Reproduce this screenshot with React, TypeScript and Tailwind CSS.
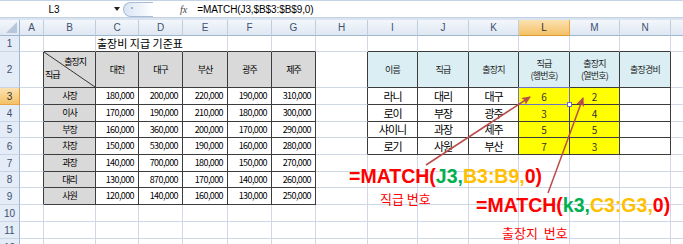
import React from 'react';

const KR = "font-['Noto_Sans_CJK_KR',sans-serif]";
const COLS = ['A', 'B', 'C', 'D', 'E', 'F', 'G', 'H', 'I', 'J', 'K', 'L', 'M', 'N', 'O'];
const ROWS = [1, 2, 3, 4, 5, 6, 7, 8, 9, 10, 11, 12];

const CITIES = ['대전', '대구', '부산', '광주', '제주'];
const GRADES = ['사장', '이사', '부장', '차장', '과장', '대리', '사원'];
const RATES = [
  ['180,000', '200,000', '220,000', '190,000', '310,000'],
  ['170,000', '190,000', '210,000', '180,000', '300,000'],
  ['160,000', '360,000', '200,000', '170,000', '290,000'],
  ['150,000', '530,000', '190,000', '160,000', '280,000'],
  ['140,000', '700,000', '180,000', '150,000', '270,000'],
  ['130,000', '870,000', '170,000', '140,000', '260,000'],
  ['120,000', '140,000', '160,000', '130,000', '250,000'],
];
const PEOPLE = [
  ['라니', '대리', '대구', '6', '2'],
  ['로이', '부장', '광주', '3', '4'],
  ['샤이니', '과장', '제주', '5', '5'],
  ['로기', '사원', '부산', '7', '3'],
];

const inLeft = (r: number, c: number) => r >= 2 && r <= 9 && c >= 2 && c <= 7;
const inRight = (r: number, c: number) => r >= 2 && r <= 6 && c >= 9 && c <= 14;
const inTable = (r: number, c: number) => inLeft(r, c) || inRight(r, c);

function FormulaBar() {
  return (
    <div className="h-[20px] flex flex-col bg-white">
      <div className="h-[1px] bg-[#c4d3e6]" />
      <div className="h-[16px] flex items-center">
        <div className="w-[108px] text-center text-[10px] text-black">L3</div>
        <svg width="6" height="4" className="ml-[6px]" viewBox="0 0 6 4">
          <path d="M0 0 L6 0 L3 4 Z" fill="#222" />
        </svg>
        <div className="ml-[3px] w-[30px] h-[15px] rounded-l-full border border-r-0 border-[#a9bcd6] bg-linear-to-r from-[#d9e4f3] to-white relative">
          <div className="absolute left-[7px] top-[4px] w-[2px] h-[2px] rounded-full bg-[#8fa2bd]" />
        </div>
        <span className="ml-[27px] text-[10px] italic font-['Liberation_Serif',serif] text-[#444]">fx</span>
        <span className="ml-[10px] text-[10px] text-black tracking-[-0.1px]">=MATCH(J3,$B$3:$B$9,0)</span>
      </div>
      <div className="h-[3px] bg-[#dae4f1] border-t border-[#c3d1e3]" />
    </div>
  );
}

function ColHeader({ label }: { label: string }) {
  const sel = label === 'L';
  return (
    <div
      className={
        sel
          ? 'flex items-center justify-center text-[10px] text-[#333] border-r border-b border-r-[#e9a546] border-b-[#e09a38] bg-linear-to-b from-[#fbe2b0] to-[#f4c166]'
          : 'flex items-center justify-center text-[10px] text-[#3e5170] border-r border-b border-r-[#c0cfe0] border-b-[#9eb6ce] bg-linear-to-b from-[#f3f7fc] to-[#dfe7f2]'
      }
    >
      {label === 'O' ? null : label}
    </div>
  );
}

function RowHeader({ r }: { r: number }) {
  const sel = r === 3;
  return (
    <div
      className={
        sel
          ? 'flex items-center justify-center text-[10px] text-[#333] border-r border-b border-r-[#e09a38] border-b-[#e9a546] bg-linear-to-b from-[#fbe2b0] to-[#f4c166]'
          : 'flex items-center justify-center text-[10px] text-[#3e5170] border-r border-b border-r-[#9eb6ce] border-b-[#c9d5e4] bg-[#e4ecf7]'
      }
    >
      {r}
    </div>
  );
}

function Cell({ r, c }: { r: number; c: number }) {
  const darkR = inTable(r, c) || inTable(r, c + 1);
  const darkB = inTable(r, c) || inTable(r + 1, c);
  let rightCls = darkR ? 'border-r-[#3c3c3c]' : 'border-r-[#d0d7e5]';
  if (r === 1 && (c === 3 || c === 4)) rightCls = 'border-r-white';
  const bottomCls = darkB ? 'border-b-[#3c3c3c]' : 'border-b-[#d0d7e5]';

  let bg = 'bg-white';
  if (inLeft(r, c) && (r === 2 || c === 2)) bg = 'bg-[#d9d9d9]';
  if (inRight(r, c) && r === 2) bg = 'bg-[#daeef3]';
  if (inRight(r, c) && r >= 3 && (c === 12 || c === 13)) bg = 'bg-[#ffff00]';

  let content: React.ReactNode = null;
  let layout = 'flex items-center justify-center';

  if (r === 1 && c === 3) {
    layout = 'relative z-10 flex items-center';
    content = (
      <span className={`${KR} text-[11px] text-black whitespace-nowrap pl-[1px]`}>출장비 지급 기준표</span>
    );
  } else if (r === 2 && c === 2) {
    layout = 'relative';
    content = (
      <>
        <svg className="absolute inset-0" width="51" height="35" viewBox="0 0 51 35">
          <line x1="0" y1="0" x2="51" y2="35" stroke="#333" strokeWidth="1" />
        </svg>
        <span className={`${KR} absolute right-[9px] top-[3px] text-[9px] tracking-[-1px] text-black`}>출장지</span>
        <span className={`${KR} absolute left-[1px] bottom-[6px] text-[9px] tracking-[-1px] text-black`}>직급</span>
      </>
    );
  } else if (r === 2 && c >= 3 && c <= 7) {
    content = <span className={`${KR} text-[9px] tracking-[-1px] text-black`}>{CITIES[c - 3]}</span>;
  } else if (r >= 3 && r <= 9 && c === 2) {
    content = <span className={`${KR} text-[9px] tracking-[-1px] text-black`}>{GRADES[r - 3]}</span>;
  } else if (r >= 3 && r <= 9 && c >= 3 && c <= 7) {
    layout = 'flex items-center justify-end pr-[4px]';
    content = <span className={`${KR} text-[9px] tracking-[-0.6px] text-black`}>{RATES[r - 3][c - 3]}</span>;
  } else if (r === 2 && c >= 9 && c <= 14) {
    const heads: React.ReactNode[] = [
      '이름',
      '직급',
      '출장지',
      <>직급<br />(행번호)</>,
      <>출장지<br />(열번호)</>,
      '출장경비',
    ];
    content = (
      <span className={`${KR} text-[9px] leading-[12px] tracking-[-0.8px] text-center text-[#222]`}>{heads[c - 9]}</span>
    );
  } else if (r >= 3 && r <= 6 && c >= 9 && c <= 11) {
    content = <span className={`${KR} text-[11px] tracking-[-1px] text-black`}>{PEOPLE[r - 3][c - 9]}</span>;
  } else if (r >= 3 && r <= 6 && (c === 12 || c === 13)) {
    content = <span className={`${KR} text-[10px] text-[#333]`}>{PEOPLE[r - 3][c - 9]}</span>;
  }

  const selected = r === 3 && c === 12;

  return (
    <div className={`${layout} ${bg} border-r border-b ${rightCls} ${bottomCls} ${selected ? 'relative' : ''}`}>
      {content}
      {selected && (
        <>
          <div className="absolute left-[-1px] top-[-1px] right-[-1px] bottom-[-1px] border border-[#6e72c4]" />
          <div className="absolute right-[-3px] bottom-[-3px] w-[5px] h-[5px] bg-white border border-[#6e72c4]" />
        </>
      )}
    </div>
  );
}

function Overlay() {
  return (
    <>
      <svg className="absolute left-0 top-0 pointer-events-none" width="683" height="244" viewBox="0 0 683 244">
        <defs>
          <marker id="ah" markerWidth="9" markerHeight="8" refX="8" refY="4" orient="auto" markerUnits="userSpaceOnUse">
            <path d="M0 0 L9 4 L0 8 L2 4 Z" fill="#b84d49" />
          </marker>
        </defs>
        <line x1="426" y1="165" x2="530" y2="97" stroke="#b84d49" strokeWidth="1.5" markerEnd="url(#ah)" />
        <line x1="548" y1="193" x2="583" y2="98" stroke="#b84d49" strokeWidth="1.5" markerEnd="url(#ah)" />
      </svg>
      <div className="absolute left-[349px] top-[167px] text-[19.5px] leading-none font-bold whitespace-nowrap">
        <span className="text-[#ff0000]">=MATCH(</span>
        <span className="text-[#00b050]">J3,</span>
        <span className="text-[#ffc000]">B3:B9,</span>
        <span className="text-[#ff0000]">0)</span>
      </div>
      <div className={`${KR} absolute left-[380px] top-[192px] text-[13px] leading-none text-[#ff0000] whitespace-pre`}>직급 번호</div>
      <div className="absolute left-[476px] top-[196px] text-[19.5px] leading-none font-bold whitespace-nowrap">
        <span className="text-[#ff0000]">=MATCH(</span>
        <span className="text-[#00b050]">k3,</span>
        <span className="text-[#ffc000]">C3:G3,</span>
        <span className="text-[#ff0000]">0)</span>
      </div>
      <div className={`${KR} absolute left-[502px] top-[226px] text-[13px] leading-none text-[#ff0000] whitespace-pre`}>출장지  번호</div>
    </>
  );
}

export default function App() {
  return (
    <div className="relative w-[683px] h-[244px] overflow-hidden bg-white font-['Liberation_Sans',Arial,sans-serif]">
      <FormulaBar />
      <div className="grid grid-cols-[20px_24px_52px_43px_44px_45px_44px_44px_52px_50px_51px_50px_51px_50px_51px_40px] grid-rows-[16px_16px_36px_17px_17px_16px_17px_17px_16px_17px_17px_17px_17px]">
        <div className="relative border-r border-b border-r-[#9eb6ce] border-b-[#9eb6ce] bg-linear-to-b from-[#f3f7fc] to-[#dfe7f2]">
          <svg className="absolute right-[2px] bottom-[2px]" width="11" height="11" viewBox="0 0 11 11">
            <path d="M11 0 L11 11 L0 11 Z" fill="#b8c6d9" />
          </svg>
        </div>
        {COLS.map((l) => (
          <ColHeader key={l} label={l} />
        ))}
        {ROWS.map((r) => (
          <React.Fragment key={r}>
            <RowHeader r={r} />
            {COLS.map((l, i) => (
              <Cell key={l} r={r} c={i + 1} />
            ))}
          </React.Fragment>
        ))}
      </div>
      <Overlay />
    </div>
  );
}
